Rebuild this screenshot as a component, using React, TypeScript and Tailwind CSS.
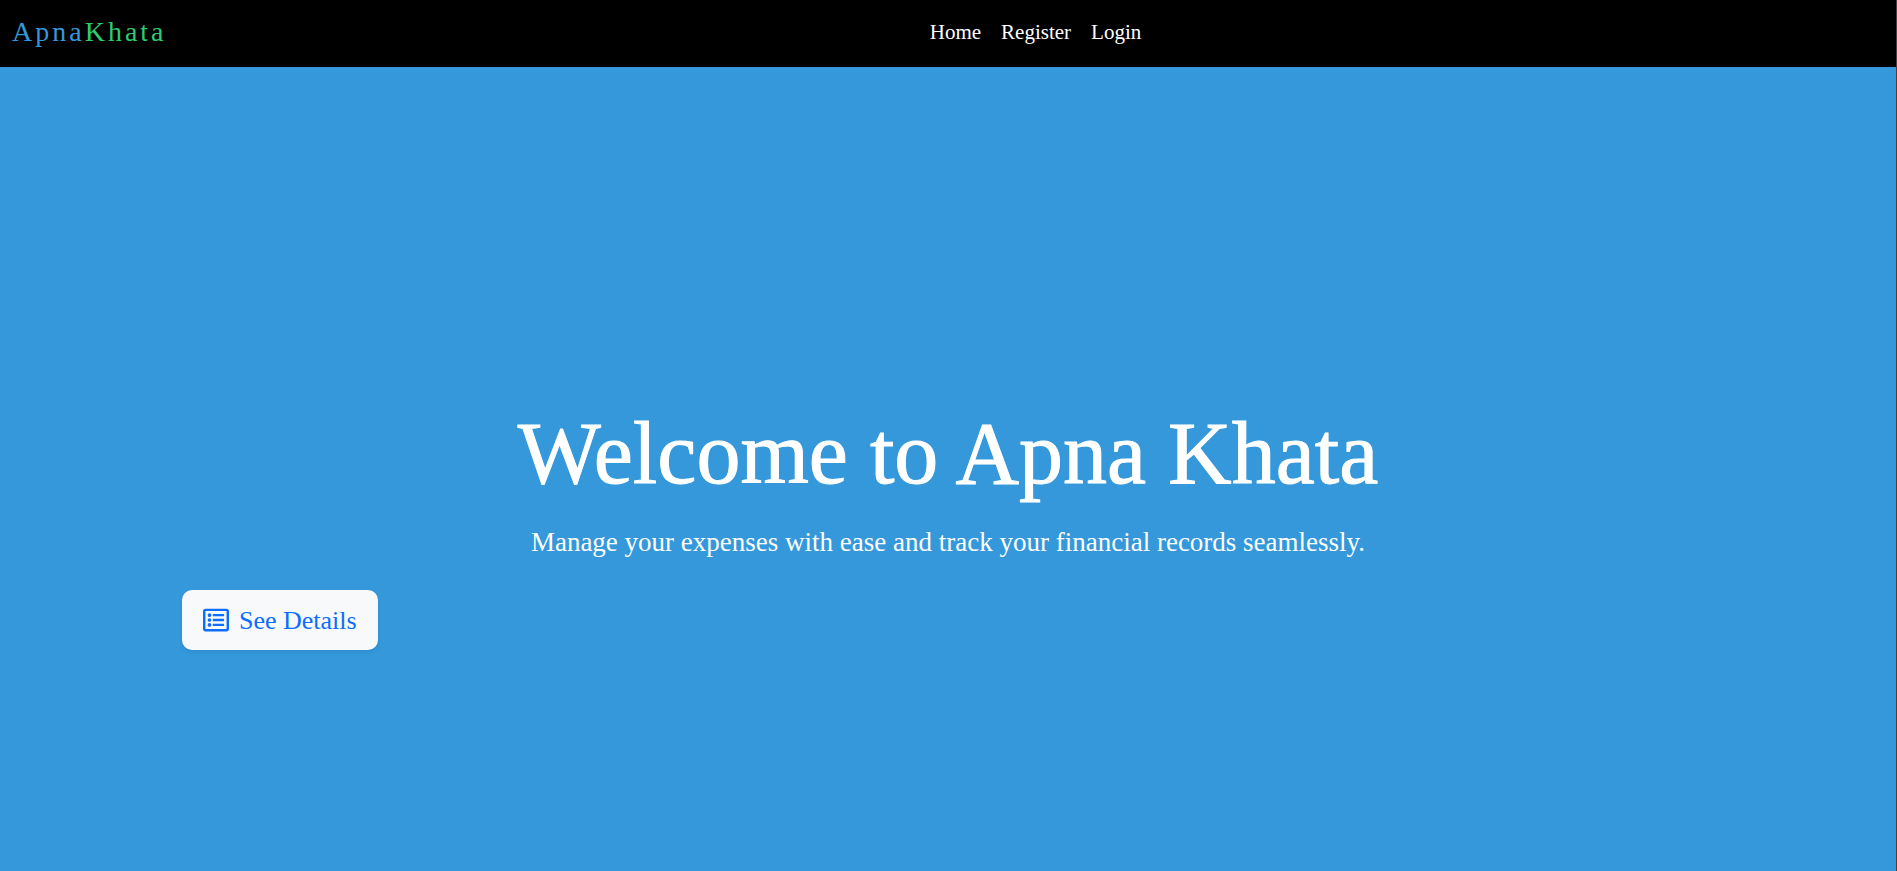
import { FaRegListAlt } from "react-icons/fa";

const links = ["Home", "Register", "Login"];

export default function App() {
  return (
    <div className="flex min-h-screen flex-col border-r border-[#3f4347] bg-[#3498db] font-['Liberation_Serif',serif] text-white">
      <header className="grid h-[67px] grid-cols-[1fr_auto_1fr] items-center bg-black px-3 pb-1">
        <a href="#home" className="text-[28px] leading-10 tracking-[3px] text-[#3498db]">
          Apna<span className="text-[#2ecc71]">Khata</span>
        </a>
        <nav className="ml-[175px] flex gap-5 text-[21px] leading-8 font-medium">
          {links.map((label) => (
            <a key={label} href={`#${label.toLowerCase()}`}>
              {label}
            </a>
          ))}
        </nav>
      </header>
      <main className="flex flex-1 flex-col justify-center px-[182px] pt-[118px]">
        <h1 className="text-center text-[88px] leading-[96px] font-medium [-webkit-text-stroke:1px]">
          Welcome to Apna Khata
        </h1>
        <p className="mt-5 text-center text-[27px] leading-10">
          Manage your expenses with ease and track your financial records seamlessly.
        </p>
        <button
          type="button"
          className="mt-7 flex h-[60px] items-center gap-[10px] self-start rounded-[10px] bg-[#f8f9fa] px-[21px] text-[26px] text-[#0d6efd] shadow-[0_2px_4px_rgba(0,0,0,0.08)]"
        >
          <FaRegListAlt aria-hidden="true" className="size-[26px]" />
          See Details
        </button>
      </main>
    </div>
  );
}
